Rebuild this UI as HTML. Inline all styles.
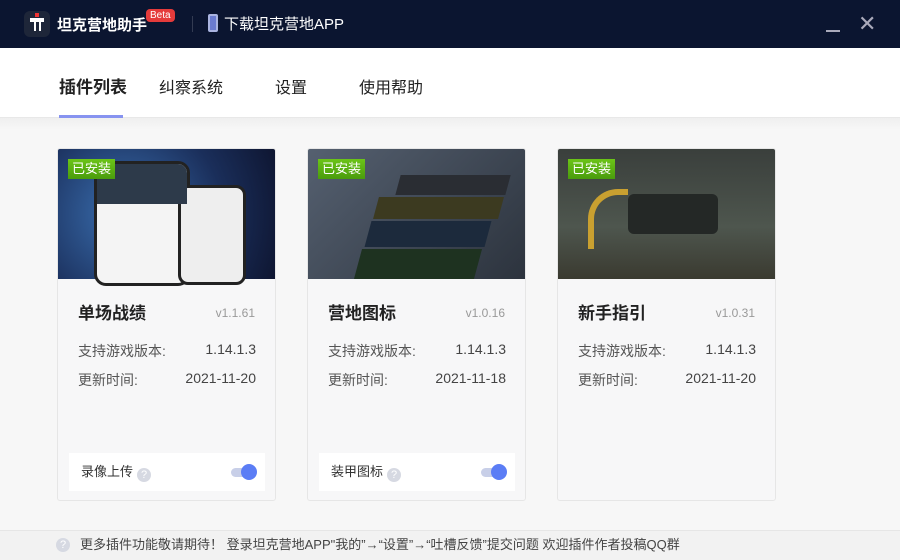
<!DOCTYPE html><html><head><meta charset="utf-8"><style>
*{margin:0;padding:0;box-sizing:border-box}
body{width:900px;height:560px;overflow:hidden;background:#f3f3f4;font-family:"Liberation Sans","Noto Sans CJK SC",sans-serif;position:relative}
.top{position:absolute;left:0;top:0;width:900px;height:48px;background:#0b1530;color:#fff}
.nav{position:absolute;top:48px;left:0;width:900px;height:70px;background:#fff;border-bottom:1px solid #e8e8e8}
.nav span{position:absolute;top:26px;font-size:16px;color:#222}
.main{position:absolute;top:118px;left:0;width:900px;height:412px;background:linear-gradient(#efefef,#f7f7f7 12px,#f7f7f7);}
.card{position:absolute;top:148px;width:219px;height:353px;background:#f7f7f8;border:1px solid #e6e6e6;border-radius:3px;overflow:hidden}
.img{position:absolute;left:0;top:0;width:219px;height:130px}
.tag{position:absolute;left:10px;top:10px;width:47px;height:20px;background:linear-gradient(#6cc418,#4a9c0c);color:#fff;font-size:13px;line-height:20px;text-align:center}
.t{position:absolute;left:20px;top:150px;font-size:17px;font-weight:bold;color:#222}
.v{position:absolute;right:20px;top:157px;font-size:12px;color:#999}
.r{position:absolute;left:20px;font-size:14px;color:#555;width:178px}
.r b{position:absolute;right:0;font-weight:normal;color:#444}
.box{position:absolute;left:11px;top:304px;width:196px;height:38px;background:#fff;font-size:13px;color:#333;line-height:38px;padding-left:12px}
.q{display:inline-block;width:14px;height:14px;border-radius:7px;background:#d6d9e2;color:#fff;font-size:11px;line-height:14px;text-align:center;vertical-align:-2px;margin-left:4px}
.sw{position:absolute;right:10px;top:11px;width:24px;height:16px}
.sw i{position:absolute;left:0;top:4px;width:22px;height:9px;border-radius:5px;background:#c8cfe8}
.sw u{position:absolute;right:-2px;top:0;width:16px;height:16px;border-radius:8px;background:#5b7df5}
.foot{position:absolute;top:530px;left:0;width:900px;height:30px;background:#f2f2f2;border-top:1px solid #e6e6e6;font-size:13px;color:#444;line-height:28px;padding-left:80px}
</style></head><body>
<div class="top">
<div style="position:absolute;left:24px;top:11px;width:26px;height:26px;border-radius:6px;background:#1e2639"></div>
<div style="position:absolute;left:30px;top:18px;width:14px;height:4px;background:#fff"></div>
<div style="position:absolute;left:34px;top:21px;width:2px;height:10px;background:#fff"></div><div style="position:absolute;left:39px;top:21px;width:2px;height:10px;background:#fff"></div>
<div style="position:absolute;left:35px;top:13px;width:4px;height:4px;background:#e33"></div>
<div style="position:absolute;left:57px;top:14px;font-size:15px;font-weight:bold">坦克营地助手</div>
<div style="position:absolute;left:146px;top:9px;background:#e53b3b;border-radius:4px;font-size:10px;padding:0 4px;line-height:13px">Beta</div>
<div style="position:absolute;left:192px;top:16px;width:1px;height:16px;background:#333b52"></div>
<div style="position:absolute;left:208px;top:14px;width:10px;height:18px;border:2px solid #aab4e0;border-radius:2px;background:#6a7bd0"></div>
<div style="position:absolute;left:224px;top:13px;font-size:15px">下载坦克营地APP</div>
<div style="position:absolute;left:826px;top:30px;width:14px;height:2px;background:#aab"></div>
<div style="position:absolute;left:858px;top:13px;font-size:22px;color:#aab;line-height:22px">✕</div>
</div>
<div class="nav">
<span style="left:59px;font-weight:bold;font-size:17px;top:25px">插件列表</span>
<span style="left:159px">纠察系统</span><span style="left:275px">设置</span><span style="left:359px">使用帮助</span>
<div style="position:absolute;left:59px;top:67px;width:64px;height:3px;background:#8793f0"></div>
</div>
<div class="main"></div>

<div class="card" style="left:57px">
<div class="img" style="background:radial-gradient(circle at 30% 50%,#3a6fb0,#1a2e5a 60%,#0e1530)"><div style="position:absolute;left:36px;top:12px;width:96px;height:125px;background:#f4f4f4;border:3px solid #222;border-radius:12px"></div><div style="position:absolute;left:120px;top:36px;width:68px;height:100px;background:#eee;border:3px solid #222;border-radius:10px"></div><div style="position:absolute;left:39px;top:15px;width:90px;height:40px;background:#2d3a4a;border-radius:9px 9px 0 0"></div></div>
<div class="tag">已安装</div>
<div class="t">单场战绩</div><div class="v">v1.1.61</div>
<div class="r" style="top:192px">支持游戏版本:<b>1.14.1.3</b></div>
<div class="r" style="top:221px">更新时间:<b>2021-11-20</b></div>
<div class="box">录像上传<span class="q">?</span><div class="sw"><i></i><u></u></div></div>
</div>

<div class="card" style="left:307px">
<div class="img" style="background:linear-gradient(135deg,#556070,#2c333d)"><div style="position:absolute;left:60px;top:72px;width:120px;height:26px;background:#1c2a3c;transform:skewX(-15deg)"></div><div style="position:absolute;left:68px;top:48px;width:125px;height:22px;background:#3c3a20;transform:skewX(-15deg)"></div><div style="position:absolute;left:50px;top:100px;width:120px;height:30px;background:#1e3220;transform:skewX(-15deg)"></div><div style="position:absolute;left:90px;top:26px;width:110px;height:20px;background:#2a2d33;transform:skewX(-15deg)"></div></div>
<div class="tag">已安装</div>
<div class="t">营地图标</div><div class="v">v1.0.16</div>
<div class="r" style="top:192px">支持游戏版本:<b>1.14.1.3</b></div>
<div class="r" style="top:221px">更新时间:<b>2021-11-18</b></div>
<div class="box">装甲图标<span class="q">?</span><div class="sw"><i></i><u></u></div></div>
</div>

<div class="card" style="left:557px">
<div class="img" style="background:linear-gradient(#3a3f3c,#4e564e 60%,#3a3a30)"><div style="position:absolute;left:70px;top:45px;width:90px;height:40px;background:#242826;border-radius:6px"></div><div style="position:absolute;left:30px;top:40px;width:40px;height:60px;border-left:6px solid #c9a030;border-top:6px solid #c9a030;border-radius:30px 0 0 0"></div></div>
<div class="tag">已安装</div>
<div class="t">新手指引</div><div class="v">v1.0.31</div>
<div class="r" style="top:192px">支持游戏版本:<b>1.14.1.3</b></div>
<div class="r" style="top:221px">更新时间:<b>2021-11-20</b></div>
</div>

<div class="foot"><span class="q" style="position:absolute;left:56px;top:7px;margin:0">?</span>更多插件功能敬请期待！ 登录坦克营地APP"我的”→“设置”→“吐槽反馈”提交问题 欢迎插件作者投稿QQ群</div>
</body></html>
